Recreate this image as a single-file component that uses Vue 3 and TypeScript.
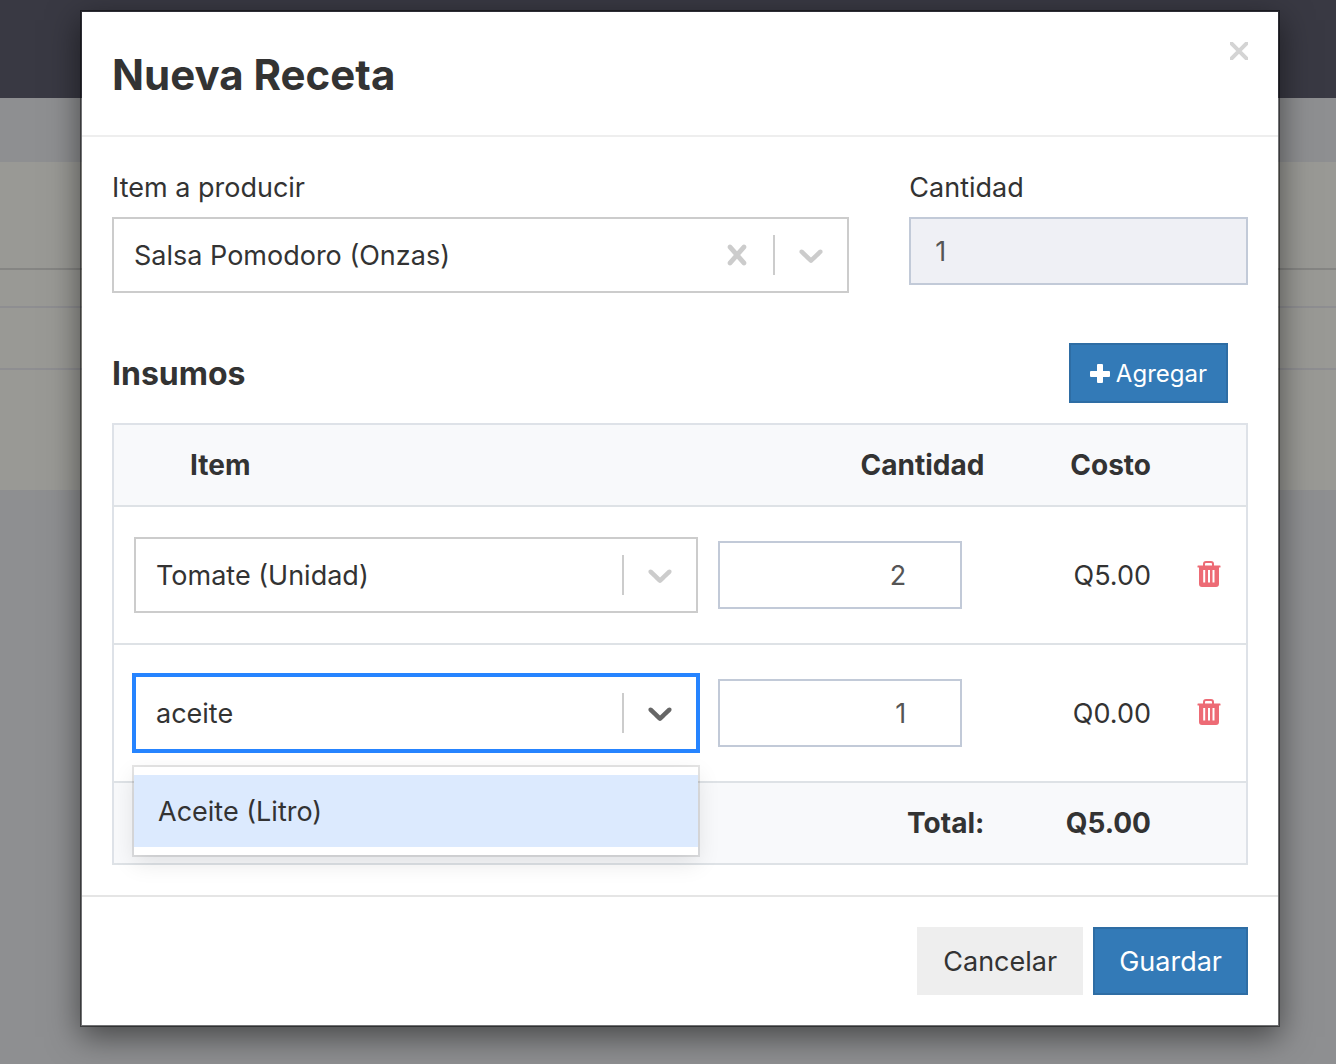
<script setup lang="ts">
import { computed, ref } from 'vue'

interface Supply {
  id: number
  item: string
  quantity: number
  cost: number
  searching: boolean
}

const product = ref('Salsa Pomodoro (Onzas)')
const productQuantity = ref('1')
const matches = ['Aceite (Litro)']

const supplies = ref<Supply[]>([
  { id: 1, item: 'Tomate (Unidad)', quantity: 2, cost: 5, searching: false },
  { id: 2, item: 'aceite', quantity: 1, cost: 0, searching: true },
])

const total = computed(() => supplies.value.reduce((sum, row) => sum + row.cost, 0))
const money = (value: number): string => `Q${value.toFixed(2)}`
const removeRow = (id: number): void => {
  supplies.value = supplies.value.filter((row) => row.id !== id)
}

const chevron =
  'M4.516 7.548c0.436-0.446 1.043-0.481 1.576 0l3.908 3.747 3.908-3.747c0.533-0.481 1.141-0.446 1.574 0 0.436 0.445 0.408 1.197 0 1.615-0.406 0.418-4.695 4.502-4.695 4.502-0.217 0.223-0.502 0.335-0.787 0.335s-0.57-0.112-0.789-0.335c0 0-4.287-4.084-4.695-4.502s-0.436-1.17 0-1.615z'
const cross =
  'M14.348 14.849c-0.469 0.469-1.229 0.469-1.697 0l-2.651-3.030-2.651 3.029c-0.469 0.469-1.229 0.469-1.697 0-0.469-0.469-0.469-1.229 0-1.697l2.758-3.15-2.759-3.152c-0.469-0.469-0.469-1.228 0-1.697s1.228-0.469 1.697 0l2.652 3.031 2.651-3.031c0.469-0.469 1.228-0.469 1.697 0s0.469 1.229 0 1.697l-2.758 3.152 2.758 3.15c0.469 0.469 0.469 1.229 0 1.698z'
</script>

<template>
  <div class="page">
    <div class="backdrop" aria-hidden="true">
      <div class="topbar"></div>
      <div class="subbar"></div>
      <div class="panel">
        <div class="panel-head"></div>
        <div class="panel-row"></div>
        <div class="panel-row tall"></div>
        <div class="panel-rest"></div>
      </div>
    </div>

    <div class="modal" role="dialog" aria-labelledby="modal-title">
      <header class="modal-header">
        <h1 id="modal-title">Nueva Receta</h1>
        <button class="close" type="button" aria-label="Cerrar">
          <svg viewBox="0 0 18 18" width="18" height="18">
            <path d="M0 0L18 18M18 0L0 18" stroke="currentColor" stroke-width="4" />
          </svg>
        </button>
      </header>

      <div class="modal-body">
        <div class="fields">
          <div class="field wide">
            <label for="product">Item a producir</label>
            <div class="control">
              <select id="product" v-model="product">
                <option>Salsa Pomodoro (Onzas)</option>
              </select>
              <button class="indicator" type="button" aria-label="Limpiar">
                <svg viewBox="0 0 20 20" width="40" height="40"><path :d="cross" /></svg>
              </button>
              <span class="separator"></span>
              <span class="indicator">
                <svg viewBox="0 0 20 20" width="40" height="40"><path :d="chevron" /></svg>
              </span>
            </div>
          </div>
          <div class="field">
            <label for="product-quantity">Cantidad</label>
            <input id="product-quantity" v-model="productQuantity" class="text-input" type="text" disabled />
          </div>
        </div>

        <div class="section-head">
          <h2>Insumos</h2>
          <button class="btn primary small" type="button">
            <svg viewBox="0 0 20 20" width="20" height="20">
              <path d="M8 0h4q1 0 1 1v6h6q1 0 1 1v4q0 1-1 1h-6v5q0 1-1 1H8q-1 0-1-1v-5H1q-1 0-1-1V8q0-1 1-1h6V1q0-1 1-1z" />
            </svg>
            Agregar
          </button>
        </div>

        <table>
          <colgroup>
            <col class="col-item" />
            <col class="col-quantity" />
            <col class="col-cost" />
            <col class="col-remove" />
          </colgroup>
          <thead>
            <tr>
              <th class="item-head">Item</th>
              <th class="num">Cantidad</th>
              <th class="num">Costo</th>
              <th></th>
            </tr>
          </thead>
          <tbody>
            <tr v-for="row in supplies" :key="row.id">
              <td class="item-cell">
                <div class="control" :class="{ focused: row.searching }">
                  <input v-if="row.searching" v-model="row.item" type="text" role="combobox" aria-expanded="true" aria-label="Item" />
                  <select v-else v-model="row.item" aria-label="Item">
                    <option>{{ row.item }}</option>
                  </select>
                  <span class="separator"></span>
                  <span class="indicator">
                    <svg viewBox="0 0 20 20" width="40" height="40"><path :d="chevron" /></svg>
                  </span>
                  <div v-if="row.searching" class="menu" role="listbox">
                    <div v-for="match in matches" :key="match" class="option" role="option" aria-selected="true">{{ match }}</div>
                  </div>
                </div>
              </td>
              <td class="quantity-cell">
                <input v-model="row.quantity" class="text-input" type="number" aria-label="Cantidad" />
              </td>
              <td class="num">{{ money(row.cost) }}</td>
              <td class="remove-cell">
                <button class="remove" type="button" aria-label="Eliminar" @click="removeRow(row.id)">
                  <svg viewBox="0 0 24 26" width="24" height="26">
                    <path d="M7 5V3Q7 1 9 1h5q2 0 2 2v2" fill="none" stroke="currentColor" stroke-width="2" />
                    <path
                      fill-rule="evenodd"
                      d="M1 4.500h22q.5 0 .5.5v1q0 .5-.5.5h-1V23q0 3-3 3H5q-3 0-3-3V6.500H1Q.5 6.500.5 6V5q0-.5.5-.5zM6.200 9v12.500h2V9zM11 9v12.500h2V9zM15.500 9v12.500h2V9z"
                    />
                  </svg>
                </button>
              </td>
            </tr>
          </tbody>
          <tfoot>
            <tr>
              <th></th>
              <th class="num">Total:</th>
              <th class="num">{{ money(total) }}</th>
              <th></th>
            </tr>
          </tfoot>
        </table>
      </div>

      <footer class="modal-footer">
        <button class="btn" type="button">Cancelar</button>
        <button class="btn primary" type="button">Guardar</button>
      </footer>
    </div>
  </div>
</template>

<style>
body {
  background: #8e8f91;
}
</style>

<style scoped>
.page {
  position: relative;
  box-sizing: border-box;
  min-height: 100vh;
  padding: 10px 56px 36px 80px;
  background: #8e8f91;
  color: #333;
  font-family: Inter, "Liberation Sans", sans-serif;
  font-size: 27px;
  line-height: 40px;
}
.page * {
  box-sizing: border-box;
}
.backdrop {
  position: absolute;
  inset: 0;
}
.topbar {
  height: 98px;
  background: #393943;
}
.subbar {
  height: 64px;
}
.panel {
  background: #999995;
}
.panel-head {
  height: 108px;
  border-bottom: 2px solid #858583;
}
.panel-row {
  height: 38px;
  border-bottom: 2px solid #8e8e91;
}
.panel-row.tall {
  height: 62px;
}
.panel-rest {
  height: 120px;
}
.modal {
  position: relative;
  background: #fff;
  background-clip: padding-box;
  border: 2px solid rgba(0, 0, 0, 0.2);
  outline: 1px solid rgba(0, 0, 0, 0.3);
  outline-offset: -1px;
  box-shadow: 0 10px 30px rgba(0, 0, 0, 0.5);
}
.modal-header {
  display: flex;
  align-items: flex-start;
  justify-content: space-between;
  padding: 30px;
  border-bottom: 2px solid #eee;
}
h1,
h2 {
  margin: 0;
  font-weight: 700;
}
h1 {
  padding-top: 2px;
  font-size: 42px;
  line-height: 61px;
}
h2 {
  padding-top: 2px;
  font-size: 32px;
  line-height: 58px;
}
button {
  font: inherit;
  color: inherit;
  cursor: pointer;
}
.close,
.remove {
  display: block;
  padding: 0;
  border: 0;
  background: none;
}
.close {
  color: #d4d4d4;
}
.close svg,
.remove svg,
.indicator svg {
  display: block;
}
svg {
  fill: currentColor;
}
.modal-body {
  padding: 30px;
}
.fields {
  display: flex;
  align-items: flex-start;
  margin: 0 -30px 50px;
}
.field {
  width: 33.333%;
  padding: 0 30px;
}
.field.wide {
  width: 66.667%;
}
label {
  display: block;
  margin-bottom: 8px;
  line-height: 42px;
}
.control {
  position: relative;
  display: flex;
  align-items: center;
  height: 76px;
  border: 2px solid #ccc;
  background: #fff;
}
.control select,
.control input {
  flex: 1;
  min-width: 0;
  height: 100%;
  margin: 0;
  padding: 0 20px;
  border: 0;
  outline: 0;
  appearance: none;
  background: none;
  color: #333;
  font: inherit;
}
.control select {
  padding-top: 2px;
}
.control.focused {
  border-color: #2684ff;
  box-shadow: 0 0 0 2px #2684ff;
}
.indicator {
  padding: 16px;
  border: 0;
  background: none;
  color: #ccc;
}
.focused .indicator {
  color: #666;
}
.separator {
  align-self: stretch;
  width: 2px;
  margin: 16px 0;
  background: #ccc;
}
.menu {
  position: absolute;
  z-index: 1;
  top: 90px;
  left: -2px;
  right: -2px;
  padding: 8px 0;
  background: #fff;
  box-shadow: 0 0 0 2px rgba(0, 0, 0, 0.1), 0 8px 22px rgba(0, 0, 0, 0.1);
}
.option {
  padding: 17px 24px 15px;
  background: #dceafe;
}
.text-input {
  display: block;
  width: 100%;
  height: 68px;
  margin: 0;
  padding: 0 24px;
  border: 2px solid #c2cad8;
  border-radius: 0;
  background: #fff;
  color: #555;
  font: inherit;
  appearance: textfield;
}
.text-input:disabled {
  background: #eff0f5;
}
.section-head {
  display: flex;
  justify-content: space-between;
  margin-bottom: 20px;
  padding-right: 20px;
}
.btn {
  height: 68px;
  padding: 2px 26px 0;
  border: 0;
  background: #eee;
}
.btn.primary {
  padding: 2px 24px 0;
  border: 2px solid #2e6da4;
  background: #337ab7;
  color: #fff;
}
.btn.primary.small {
  display: flex;
  align-items: center;
  gap: 6px;
  height: 60px;
  padding: 2px 19px 0;
  font-size: 24px;
}
table {
  width: 100%;
  table-layout: fixed;
  border-collapse: collapse;
  border: 2px solid #dee2e8;
}
.col-item {
  width: 52.5%;
}
.col-quantity {
  width: 26.1%;
}
.col-cost {
  width: 14.7%;
}
.col-remove {
  width: 6.7%;
}
tr {
  border-bottom: 2px solid #dee2e6;
}
th {
  height: 82px;
  padding: 0 20px;
  background: #f8f9fb;
  font-size: 28px;
  font-weight: 700;
}
td {
  height: 138px;
  padding: 0 20px;
}
.item-head {
  padding-left: 76px;
  text-align: left;
}
.num {
  text-align: right;
}
td.num {
  padding-top: 2px;
}
.item-cell {
  padding-right: 10px;
}
.quantity-cell {
  padding-left: 10px;
  padding-right: 42px;
}
.quantity-cell .text-input {
  padding-right: 54px;
  text-align: right;
}
.quantity-cell .text-input::-webkit-inner-spin-button {
  display: none;
}
.remove-cell {
  padding: 0 20px 2px 26px;
}
.remove {
  color: #ed6b75;
}
.modal-footer {
  display: flex;
  justify-content: flex-end;
  gap: 10px;
  padding: 30px;
  border-top: 2px solid #e5e5e5;
}
</style>
